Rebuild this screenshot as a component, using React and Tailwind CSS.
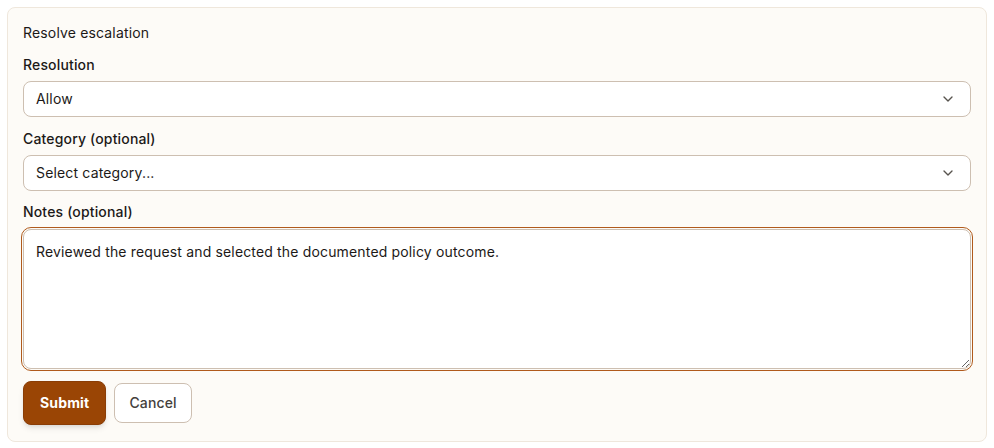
import React from "react";
import { ChevronDown } from "lucide-react";

const Select = ({ value }) => {
  return (
    <div className="relative">
      <div className="flex h-9 items-center justify-between rounded-lg border border-[#cdbfb1] bg-white pl-3 pr-3 text-sm text-[#1c1917]">
        <span>{value}</span>
        <ChevronDown size={16} strokeWidth={2} className="mr-[2px] text-[#57534e]" />
      </div>
    </div>
  );
};

const App = () => {
  return (
    <div
      className="min-h-screen bg-white p-[7px] tracking-[0.01em]"
      style={{ fontFamily: "Inter, 'Liberation Sans', sans-serif" }}
    >
      <div className="flex flex-col rounded-lg border border-[#efe7dc] bg-[#fdfbf7] px-[15px] pt-[15px] pb-4">
        <h2 className="text-sm leading-5 text-[#1c1917]">Resolve escalation</h2>

        <label className="mt-3 text-sm leading-5 font-medium text-[#1c1917]">
          Resolution
        </label>
        <div className="mt-[6px]">
          <Select value="Allow" />
        </div>

        <label className="mt-3 text-sm leading-5 font-medium text-[#1c1917]">
          Category (optional)
        </label>
        <div className="mt-[6px]">
          <Select value="Select category..." />
        </div>

        <label className="mt-[11px] text-sm leading-5 font-medium text-[#1c1917]">
          Notes (optional)
        </label>
        <textarea
          className="mt-[7px] h-[140px] rounded-lg border border-[#cdbfb1] bg-white px-3 pt-3 pb-2 text-sm leading-5 text-[#1c1917] outline outline-1 outline-offset-1 outline-[#b05a1c]"
          defaultValue="Reviewed the request and selected the documented policy outcome."
        />

        <div className="mt-3 flex items-center gap-2">
          <button className="h-11 rounded-lg border border-[#8a3d06] bg-[#9a4505] px-4 text-sm font-bold text-white shadow-md">
            Submit
          </button>
          <button className="h-10 rounded-lg border border-[#cdbfb1] bg-white px-[14px] text-sm font-medium text-[#44403c]">
            Cancel
          </button>
        </div>
      </div>
    </div>
  );
};

export default App;
